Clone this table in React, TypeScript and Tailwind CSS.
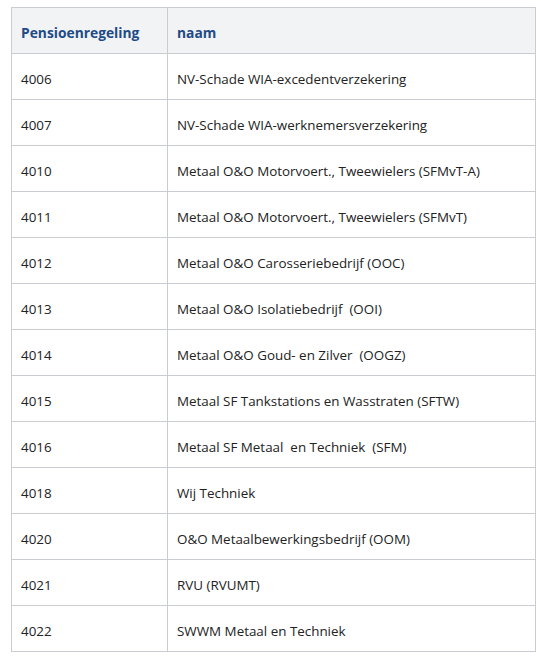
import React from "react";

const rows: [string, string][] = [
  ["4006", "NV-Schade WIA-excedentverzekering"],
  ["4007", "NV-Schade WIA-werknemersverzekering"],
  ["4010", "Metaal O&O Motorvoert., Tweewielers (SFMvT-A)"],
  ["4011", "Metaal O&O Motorvoert., Tweewielers (SFMvT)"],
  ["4012", "Metaal O&O Carosseriebedrijf (OOC)"],
  ["4013", "Metaal O&O Isolatiebedrijf  (OOI)"],
  ["4014", "Metaal O&O Goud- en Zilver  (OOGZ)"],
  ["4015", "Metaal SF Tankstations en Wasstraten (SFTW)"],
  ["4016", "Metaal SF Metaal  en Techniek  (SFM)"],
  ["4018", "Wij Techniek"],
  ["4020", "O&O Metaalbewerkingsbedrijf (OOM)"],
  ["4021", "RVU (RVUMT)"],
  ["4022", "SWWM Metaal en Techniek"],
];

export default function App() {
  return (
    <div className="w-[541px] h-[659px] bg-white pt-[7px] pl-[11px]" style={{ fontFamily: '"Open Sans", sans-serif' }}>
      <table className="w-[525px] border-collapse text-[13.4px] text-[#222222]">
        <thead>
          <tr className="h-[46px] bg-[#f2f3f5]">
            <th className="w-[156px] border border-[#c9ccd3] pl-[9px] pt-[5px] text-left font-bold text-[13.8px] text-[#1f4b86]">Pensioenregeling</th>
            <th className="border border-[#c9ccd3] pl-[9px] pt-[5px] text-left font-bold text-[13.8px] text-[#1f4b86]">naam</th>
          </tr>
        </thead>
        <tbody>
          {rows.map(([code, name]) => (
            <tr key={code} className="h-[46px]">
              <td className="border border-[#c9ccd3] pl-[9px] pt-[5px] whitespace-pre">{code}</td>
              <td className="border border-[#c9ccd3] pl-[9px] pt-[5px] whitespace-pre">{name}</td>
            </tr>
          ))}
        </tbody>
      </table>
    </div>
  );
}
